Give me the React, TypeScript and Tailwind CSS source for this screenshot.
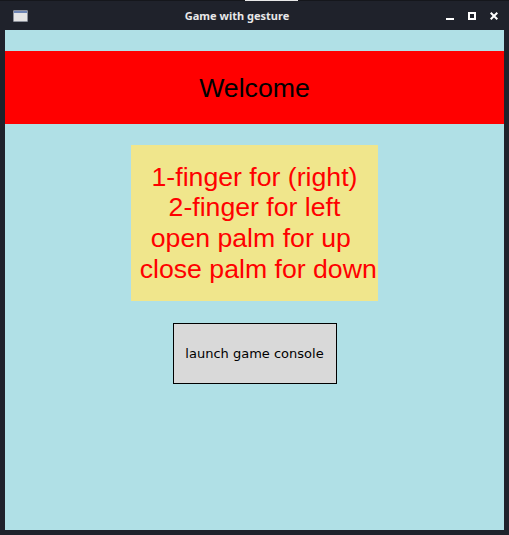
import React from "react";

function TitleBar() {
  return (
    <div className="relative flex h-[30px] items-center pt-[2px]">
      <div className="absolute left-0 top-0 h-[1px] w-full bg-[#15171c]" />
      <div className="absolute left-[245px] top-0 h-[1px] w-[53px] bg-[#e8e8e8]" />
      {/* window icon */}
      <div className="ml-[13px] flex h-[12px] w-[15px] flex-col overflow-hidden rounded-[1px] border border-[#8a8f99] bg-[#e4e4e4]">
        <div className="h-[2px] w-full bg-[#6f86b5]" />
      </div>
      <div
        className="flex-1 text-center text-[11px] font-bold text-[#e8e8e8]"
        style={{ fontFamily: '"Noto Sans", "DejaVu Sans", sans-serif' }}
      >
        Game with gesture
      </div>
      <div className="mr-[11px] flex items-center gap-[14px]">
        <div className="flex h-[8px] w-[8px] items-end">
          <div className="h-[2px] w-[8px] bg-white" />
        </div>
        <div className="h-[8px] w-[8px] border-2 border-white" />
        <svg width="8" height="8" viewBox="0 0 8 8">
          <path d="M0.7 0.7 L7.3 7.3 M7.3 0.7 L0.7 7.3" stroke="#ffffff" strokeWidth="2" />
        </svg>
      </div>
    </div>
  );
}

export default function App() {
  const lines = ["1-finger for (right)", "2-finger for left", "open palm for up ", " close palm for down"];

  return (
    <div className="flex h-[535px] w-[509px] flex-col bg-[#1f222b]">
      <TitleBar />
      <div
        className="mx-[5px] flex h-[500px] flex-col items-center bg-[#b0e0e6] pt-[21px]"
        style={{ fontFamily: '"Liberation Sans", Arial, sans-serif' }}
      >
        <div className="flex h-[73px] w-full items-center justify-center bg-[#ff0000] text-[26.67px] text-black">
          Welcome
        </div>
        <div className="mt-[21px] flex h-[156px] w-[247px] flex-col items-center justify-center bg-[#f0e68c] text-[26.67px] leading-[30.67px] text-[#ff0000]">
          {lines.map((l) => (
            <div key={l} className="whitespace-pre">
              {l}
            </div>
          ))}
        </div>
        <button
          className="mt-[22px] flex h-[61px] w-[164px] items-center justify-center border border-black bg-[#d9d9d9] text-[13px] text-black"
          style={{ fontFamily: '"DejaVu Sans", sans-serif' }}
        >
          launch game console
        </button>
      </div>
    </div>
  );
}
